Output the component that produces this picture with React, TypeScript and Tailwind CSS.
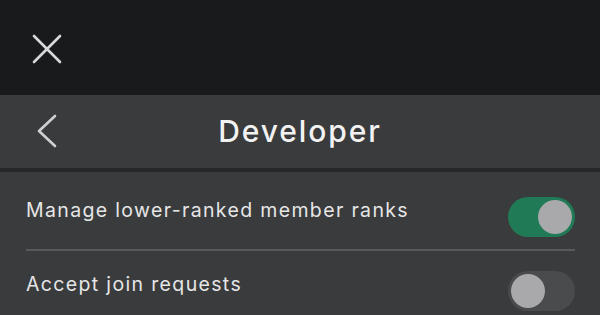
import React from "react";

function Toggle({ on }: { on: boolean }) {
  return (
    <div
      className={
        "mt-[13px] w-[67px] h-[40px] rounded-full flex items-center p-[3px] " +
        (on ? "bg-[#1f7a55] justify-end" : "bg-[#4a4b4d] justify-start")
      }
    >
      <div className="w-[34px] h-[34px] rounded-full bg-[#a9a9ab]" />
    </div>
  );
}

export default function App() {
  return (
    <div
      className="w-[600px] h-[315px] overflow-hidden bg-[#393b3d] text-[#e6e6e6]"
      style={{ fontFamily: "Inter, 'Noto Sans', sans-serif" }}
    >
      {/* top bar with close */}
      <div className="h-[95px] bg-[#191a1c] flex items-center pl-[32px] pt-[2px]">
        <svg width="30" height="30" viewBox="0 0 30 30">
          <path d="M2 2 L28 28 M28 2 L2 28" stroke="#d9d9d9" strokeWidth="2.6" strokeLinecap="round" />
        </svg>
      </div>

      {/* header */}
      <div className="h-[73px] relative flex items-center justify-center border-b-[4px] border-[#262729] box-content">
        <svg className="absolute left-[35px] top-[19px]" width="24" height="34" viewBox="0 0 24 34">
          <path d="M20 2 L4 17 L20 32" stroke="#d0d0d0" strokeWidth="2.6" fill="none" strokeLinecap="round" strokeLinejoin="round" />
        </svg>
        <h1 className="text-[30px] font-medium tracking-[1.9px] text-[#f2f2f2]">Developer</h1>
      </div>

      {/* settings rows */}
      <div className="px-[26px] pr-[25px]">
        <div className="h-[79px] flex items-center justify-between border-b-[2px] border-[#58595b]">
          <span className="text-[19.5px] tracking-[1.35px]">Manage lower-ranked member ranks</span>
          <Toggle on />
        </div>
        <div className="h-[67px] flex items-center justify-between">
          <span className="text-[19.5px] tracking-[1.35px]">Accept join requests</span>
          <Toggle on={false} />
        </div>
      </div>
    </div>
  );
}
